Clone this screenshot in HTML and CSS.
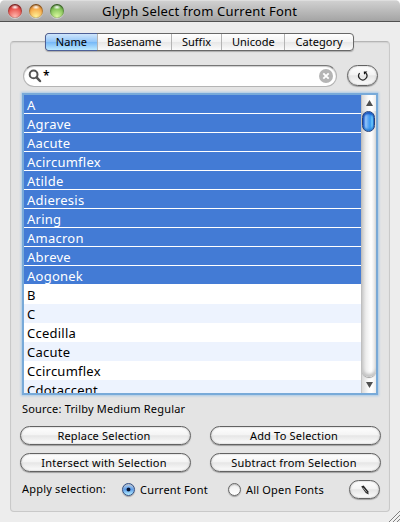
FILE: index.html
```html
<!DOCTYPE html>
<html lang="en">
<head>
<meta charset="utf-8">
<title>Glyph Select from Current Font</title>
<link rel="stylesheet" href="styles.css">
</head>
<body>
<div class="window">
  <header class="titlebar">
    <div class="lights"><i class="light red"></i><i class="light amber"></i><i class="light green"></i></div>
    <h1><span>Glyph Select from Current Font</span></h1>
  </header>
  <main class="panel">
    <nav class="tabs">
      <span class="tab active">Name</span><span class="tab">Basename</span><span class="tab">Suffix</span><span class="tab">Unicode</span><span class="tab">Category</span>
    </nav>
    <div class="searchrow">
      <div class="search">
        <svg width="14" height="14" viewBox="0 0 14 14"><circle cx="5.6" cy="5.4" r="3.9" fill="none" stroke="#555" stroke-width="2"/><path d="M8.6 8.4 12 12" stroke="#555" stroke-width="2.5" stroke-linecap="round"/></svg>
        <span class="query">*</span>
        <svg width="14" height="14" viewBox="0 0 14 14"><circle cx="7" cy="7" r="7" fill="#b5b5b5"/><path d="M4.3 4.3 9.7 9.7M9.7 4.3 4.3 9.7" stroke="#fff" stroke-width="1.9"/></svg>
      </div>
      <div class="pill icon refresh"><svg width="12" height="12" viewBox="0 0 12 12"><path d="M2.6 3.2A4.1 4.1 0 1 0 8.8 3" fill="none" stroke="#222" stroke-width="1.2"/><path d="M6.8 1.4H10.4L7 4.7Z" fill="#111"/></svg></div>
    </div>
    <div class="listbox">
      <ul class="list">
        <li class="sel">A</li><li class="sel">Agrave</li><li class="sel">Aacute</li><li class="sel">Acircumflex</li><li class="sel">Atilde</li><li class="sel">Adieresis</li><li class="sel">Aring</li><li class="sel">Amacron</li><li class="sel">Abreve</li><li class="sel">Aogonek</li>
        <li>B</li><li>C</li><li>Ccedilla</li><li>Cacute</li><li>Ccircumflex</li><li>Cdotaccent</li>
      </ul>
      <div class="scrollbar">
        <div class="arrow up"><svg width="7" height="6" viewBox="0 0 7 6"><path d="M3.5 0 7 6H0Z" fill="#505050"/></svg></div>
        <div class="track"><div class="thumb"></div></div>
        <div class="arrow down"><svg width="7" height="6" viewBox="0 0 7 6"><path d="M0 0H7L3.5 6Z" fill="#505050"/></svg></div>
      </div>
    </div>
    <p class="source">Source: Trilby Medium Regular</p>
    <div class="actions">
      <div class="pill replace">Replace Selection</div><div class="pill add">Add To Selection</div>
      <div class="pill intersect">Intersect with Selection</div><div class="pill subtract">Subtract from Selection</div>
    </div>
    <div class="apply">
      <span class="label">Apply selection:</span>
      <span class="radio on"></span><span class="current">Current Font</span>
      <span class="radio"></span><span class="all">All Open Fonts</span>
      <div class="pill icon edit"><svg width="10" height="10" viewBox="0 0 10 10"><path d="M1.2 1.6 3.6.6 8.2 6.2 8.6 9.4 5.8 8Z" fill="#222"/><path d="M3 2.6 6.9 7.3" stroke="#aaa" stroke-width="1"/></svg></div>
    </div>
  </main>
  <svg class="grip" width="11" height="11" viewBox="0 0 11 11"><path d="M0 11 11 0M4 11 11 4M8 11 11 8" stroke="#808080"/><path d="M1.3 11 11 1.3M5.3 11 11 5.3" stroke="#fff" stroke-width=".6"/></svg>
</div>
</body>
</html>
```

FILE: styles.css
```css
* { box-sizing: border-box; }
body { margin: 0; background: #fff; font-family: "Noto Sans", sans-serif; font-size: 11px; letter-spacing: .19px; color: #000; }
.window { position: relative; width: 400px; height: 522px; background: #ededed; border-radius: 5px 5px 0 0; overflow: hidden; }
.titlebar { height: 22px; display: flex; align-items: center; background: linear-gradient(#d0d0d0, #a4a4a4); border-bottom: 1px solid #505050; border-top: 1px solid #dedede; }
.lights { display: flex; gap: 7px; padding-left: 8px; width: 102px; }
.light { width: 14px; height: 14px; border-radius: 50%; box-shadow: inset 0 1px 2px rgba(0,0,0,.5), inset 0 0 1px rgba(0,0,0,.5), 0 1px 0 rgba(255,255,255,.45); }
.red { background: radial-gradient(ellipse 4px 2.5px at 50% 22%, #fff, transparent), radial-gradient(circle at 50% 90%, #ffb9b0, #e8504a 60%, #b52828); }
.amber { background: radial-gradient(ellipse 4px 2.5px at 50% 22%, #fff, transparent), radial-gradient(circle at 50% 90%, #fff39a, #f5a545 60%, #b5641c); }
.green { background: radial-gradient(ellipse 4px 2.5px at 50% 22%, #fff, transparent), radial-gradient(circle at 50% 90%, #dcfaa0, #7fc055 60%, #3f7c2c); }
h1 { margin: 0; font-size: 13px; font-weight: 400; line-height: 20px; letter-spacing: .21px; white-space: nowrap; }
.panel { margin: 19px 10px 0; height: 471px; background: #e4e4e4; border: 1px solid #c9c9c9; border-top: 1px solid #b5b5b5; box-shadow: inset 0 1px 1px #d2d2d2; border-radius: 4px; padding: 0 9px; }
.tabs { display: flex; width: 309px; height: 18px; margin: -9px 0 0 25px; border: 1px solid #686868; border-radius: 4px; background: linear-gradient(#fff, #f3f3f3 48%, #e7e7e7 52%, #fbfbfb); box-shadow: 0 1px 1px rgba(0,0,0,.25); }
.tab { height: 16px; line-height: 16px; text-align: center; white-space: nowrap; border-left: 1px solid #b4b4b4; width: 63px; letter-spacing: .02px; }
.tab:nth-child(1) { width: 51px; border: 0; }
.tab:nth-child(2) { width: 74px; letter-spacing: 0; }
.tab:nth-child(3) { width: 51px; }
.tab:nth-child(5) { width: 69px; }
.active { background: linear-gradient(#cfe5fb, #93c6f8 48%, #77b8f7 52%, #bdeaff); border-radius: 3px 0 0 3px; box-shadow: -1px 0 0 #4d5f96, 0 -1px 0 #4d5f96, 0 1px 0 #4d5f96; }
.searchrow { display: flex; align-items: center; justify-content: space-between; margin: 13px 2px 0 3px; height: 23px; }
.search { display: flex; align-items: center; width: 314px; height: 22px; border-radius: 11px; background: #fff; border: 1px solid #b4b4b4; border-top-color: #777; box-shadow: inset 0 1px 1px #ccc; padding: 0 3px 0 4px; }
.query { flex: 1; font-size: 12px; line-height: 20px; padding-left: 1px; font-weight: 600; }
.pill { height: 19px; border: 1px solid #626262; border-radius: 10px; background: linear-gradient(#fff, #f4f4f4 45%, #e6e6e6 52%, #fdfdfd); box-shadow: 0 1px 1px rgba(0,0,0,.3), inset 0 0 2px #aaa; text-align: center; line-height: 17px; white-space: nowrap; }
.actions .pill { padding-right: 2px; }
.icon { display: flex; align-items: center; justify-content: center; width: 31px; }
.refresh { height: 21px; border-radius: 11px; }
.listbox { display: flex; margin: 8px 2px 0 4px; width: 352px; height: 298px; box-shadow: 0 0 0 2px #78aad9, 0 0 2px 3px #a9c9e6; background: #fff; }
.list { list-style: none; margin: 0; padding: 0; width: 337px; overflow: hidden; }
.list li { height: 19px; line-height: 20px; font-size: 13px; letter-spacing: .24px; padding-left: 3px; background: #fff; white-space: nowrap; }
.list li:nth-child(even) { background: #edf3fe; }
.list li.sel { background: #437bd5; color: #fff; border-bottom: 1px solid #fff; }
.scrollbar { display: flex; flex-direction: column; width: 15px; border-left: 1px solid #c4c4c4; background: linear-gradient(90deg, #dadada, #fafafa 45%, #fff 70%, #ececec); }
.arrow { display: flex; justify-content: center; align-items: center; height: 16px; }
.track { flex: 1; border-radius: 0 0 8px 8px; background: linear-gradient(90deg, #cfcfcf, #eee 30%, #fff 65%, #e4e4e4); box-shadow: 0 1px 1px #999, inset 0 -3px 3px #c4c4c4; }
.thumb { width: 13px; height: 21px; border-radius: 7px; border: 1px solid #26427c; background: linear-gradient(90deg, #164cca, #94c7fb 25%, #62a8f4 45%, #3598f2 65%, #71d1ff 85%, #1860bb); box-shadow: inset 0 2px 2px #1752bd, inset 0 -2px 2px #2e82d7; }
.source { margin: 8px 0 0 2px; height: 16px; line-height: 16px; white-space: nowrap; }
.actions { display: grid; grid-template-columns: 171px 171px; column-gap: 19px; row-gap: 8px; margin: 9px 0 0 -.5px; }
.apply { display: flex; align-items: center; margin-top: 8px; height: 19px; white-space: nowrap; }
.label { width: 102px; padding: 0 0 2px 2px; }
.radio { width: 13px; height: 13px; border-radius: 50%; border: 1px solid #666; background: linear-gradient(#eee, #fff); box-shadow: 0 1px 1px rgba(0,0,0,.3), inset 0 1px 1px #bbb; margin-right: 5px; flex: none; }
.on { border-color: #314e83; background: radial-gradient(circle, #06122c 1.4px, transparent 2.4px), linear-gradient(#b0cff5, #5d9eea 50%, #b9f0ff); }
.current { width: 88px; }
.all { width: 103px; }
.edit { flex: none; }
.grip { position: absolute; right: 0; bottom: 0; }
```
